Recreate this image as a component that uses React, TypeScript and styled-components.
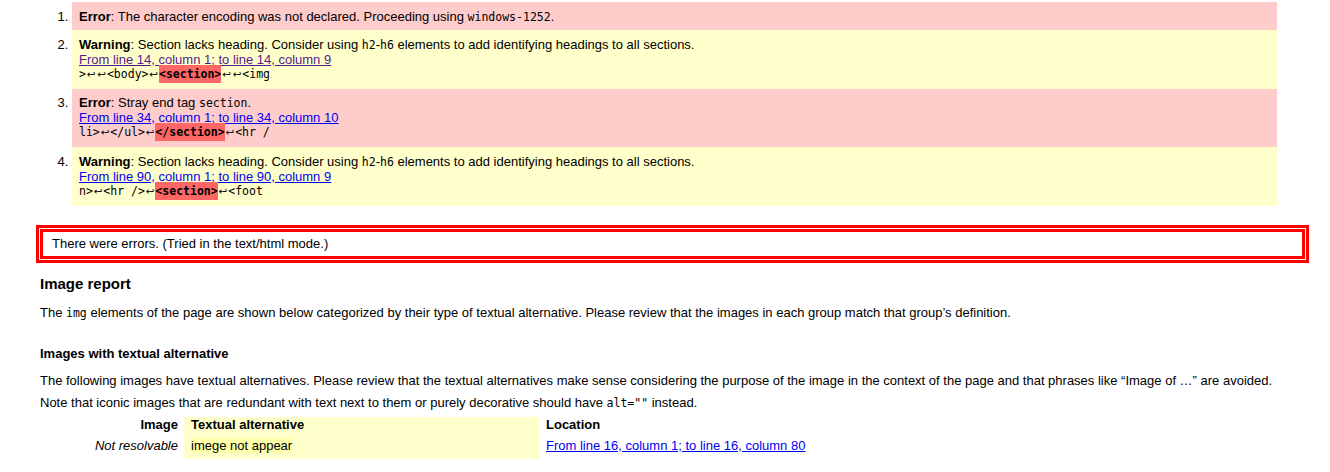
import React from "react";
import styled, { createGlobalStyle } from "styled-components";

const Global = createGlobalStyle`
  html, body { margin: 0; padding: 0; background: #fff; }
  body {
    font-family: "Liberation Sans", Arial, sans-serif;
    font-size: 13px;
    color: #000;
  }
`;

const Page = styled.div`
  padding-top: 2px;
  width: 1330px;
`;

const MessageList = styled.ol`
  margin: 0;
  padding: 0 53px 0 72px;
  list-style: decimal outside;
`;

const Message = styled.li<{ $kind: "error" | "warning" }>`
  background: ${(p) => (p.$kind === "error" ? "#ffcccc" : "#ffffcc")};
  padding: 6.5px 7px 7px;
  line-height: 15px;
  &:first-child {
    padding-bottom: 6.5px;
  }
`;

const Line = styled.div`
  height: 15px;
  line-height: 15px;
  white-space: nowrap;
`;

const Code = styled.code`
  font-family: "DejaVu Sans Mono", "Liberation Mono", monospace;
  font-size: 11.5px;
  line-height: 1;
`;

const Extract = styled.code`
  display: block;
  height: 15px;
  line-height: 15px;
  font-family: "DejaVu Sans Mono", "Liberation Mono", monospace;
  font-size: 11.5px;
  white-space: pre;
`;

const Arrow = styled.span`
  display: inline-block;
  width: 10.5px;
  text-align: center;
  font-family: "DejaVu Sans", sans-serif;
  font-size: 10.5px;
  line-height: 1;
`;

const Highlight = styled.b`
  background: #ff6666;
  line-height: 1;
  padding: 2px 0;
`;

const Link = styled.a<{ $visited?: boolean }>`
  color: ${(p) => (p.$visited ? "#551a8b" : "#0000ee")};
  text-decoration: underline;
  cursor: pointer;
`;

const Failure = styled.p`
  margin: 19px 21px 0 36px;
  border: 3px solid #ff0000;
  box-shadow: inset 0 0 0 1px #ffffff, inset 0 0 0 4px #ff0000;
  padding: 8px 13px;
  line-height: 16px;
`;

const Report = styled.section`
  padding-left: 40px;
`;

const H2 = styled.h2`
  margin: 11px 0 0;
  font-size: 15px;
  line-height: 20px;
  font-weight: bold;
`;

const H3 = styled.h3`
  margin: 25px 0 0;
  font-size: 13px;
  line-height: 16px;
  font-weight: bold;
`;

const Para = styled.p<{ $top: number; $lh: number }>`
  margin: ${(p) => p.$top}px 0 0;
  line-height: ${(p) => p.$lh}px;
`;

const Table = styled.table`
  margin-top: 3px;
  border-collapse: collapse;
  border-spacing: 0;
`;

type Col = "img" | "alt" | "loc";

const colStyle = (c: Col) =>
  c === "img"
    ? `width: 138px; padding-right: 6px; text-align: right;`
    : c === "alt"
    ? `width: 348px; padding-left: 7px; text-align: left; background: #ffffcc;`
    : `padding-left: 7px; text-align: left;`;

const Cell = styled.td<{ $col: Col }>`
  padding: 0 0 5px 0;
  line-height: 16px;
  vertical-align: top;
  ${(p) => colStyle(p.$col)}
  ${(p) => (p.$col === "img" ? "font-style: italic;" : "")}
`;

const Head = styled.th<{ $col: Col }>`
  padding: 0 0 5px 0;
  line-height: 16px;
  vertical-align: top;
  font-weight: bold;
  ${(p) => colStyle(p.$col)}
`;

const AltText = styled.span`
  background: #ffffaa;
`;

const R = () => <Arrow>{"\u21A9"}</Arrow>;

export default function App() {
  return (
    <Page>
      <Global />
      <MessageList>
        <Message $kind="error">
          <Line>
            <strong>Error</strong>: The character encoding was not declared. Proceeding using{" "}
            <Code>windows-1252</Code>.
          </Line>
        </Message>
        <Message $kind="warning">
          <Line>
            <strong>Warning</strong>: Section lacks heading. Consider using <Code>h2</Code>-<Code>h6</Code>{" "}
            elements to add identifying headings to all sections.
          </Line>
          <Line>
            <Link $visited>From line 14, column 1; to line 14, column 9</Link>
          </Line>
          <Extract>
            {">"}
            <R />
            <R />
            {"<body>"}
            <R />
            <Highlight>{"<section>"}</Highlight>
            <R />
            <R />
            {"<img"}
          </Extract>
        </Message>
        <Message $kind="error">
          <Line>
            <strong>Error</strong>: Stray end tag <Code>section</Code>.
          </Line>
          <Line>
            <Link>From line 34, column 1; to line 34, column 10</Link>
          </Line>
          <Extract>
            {"li>"}
            <R />
            {"</ul>"}
            <R />
            <Highlight>{"</section>"}</Highlight>
            <R />
            {"<hr /"}
          </Extract>
        </Message>
        <Message $kind="warning">
          <Line>
            <strong>Warning</strong>: Section lacks heading. Consider using <Code>h2</Code>-<Code>h6</Code>{" "}
            elements to add identifying headings to all sections.
          </Line>
          <Line>
            <Link>From line 90, column 1; to line 90, column 9</Link>
          </Line>
          <Extract>
            {"n>"}
            <R />
            {"<hr />"}
            <R />
            <Highlight>{"<section>"}</Highlight>
            <R />
            {"<foot"}
          </Extract>
        </Message>
      </MessageList>

      <Failure>There were errors. (Tried in the text/html mode.)</Failure>

      <Report>
        <H2>Image report</H2>
        <Para $top={11} $lh={16}>
          The <Code>img</Code> elements of the page are shown below categorized by their type of textual
          alternative. Please review that the images in each group match that group’s definition.
        </Para>
        <H3>Images with textual alternative</H3>
        <Para $top={8} $lh={22}>
          The following images have textual alternatives. Please review that the textual alternatives make
          sense considering the purpose of the image in the context of the page and that phrases like “Image
          of …” are avoided.
          <br />
          Note that iconic images that are redundant with text next to them or purely decorative should have{" "}
          <Code>alt=""</Code> instead.
        </Para>
        <Table>
          <thead>
            <tr>
              <Head $col="img">Image</Head>
              <Head $col="alt">Textual alternative</Head>
              <Head $col="loc">Location</Head>
            </tr>
          </thead>
          <tbody>
            <tr>
              <Cell $col="img">Not resolvable</Cell>
              <Cell $col="alt">
                <AltText>imege not appear</AltText>
              </Cell>
              <Cell $col="loc">
                <Link>From line 16, column 1; to line 16, column 80</Link>
              </Cell>
            </tr>
          </tbody>
        </Table>
      </Report>
    </Page>
  );
}
